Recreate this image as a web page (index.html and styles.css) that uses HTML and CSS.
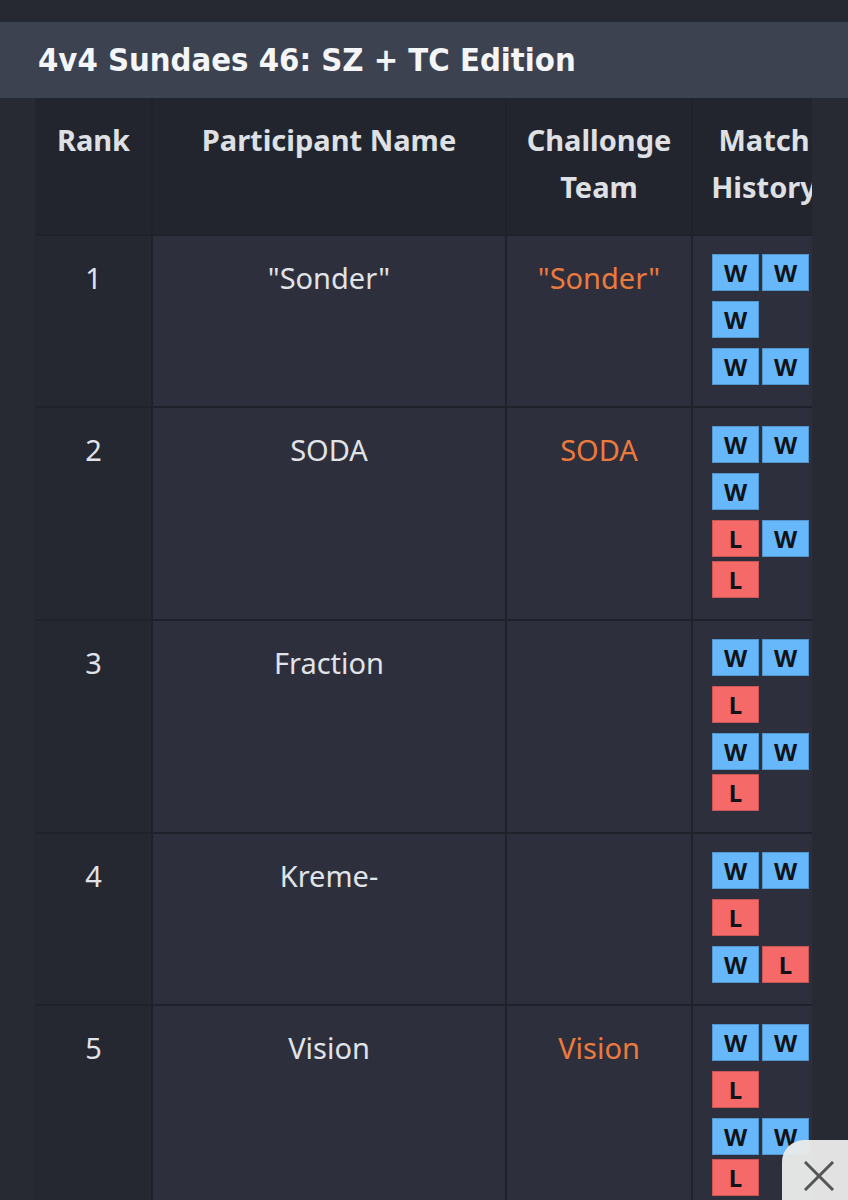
FILE: index.html
```html
<!DOCTYPE html>
<html lang="en">
<head>
<meta charset="utf-8">
<title>4v4 Sundaes 46: SZ + TC Edition</title>
<link rel="stylesheet" href="styles.css">
</head>
<body>
<div class="topbar"></div>
<header class="title-bar">
  <h1 class="title">4v4 Sundaes 46: SZ + TC Edition</h1>
</header>
<main class="page">
  <div class="table-scroll">
    <div class="standings">
      <div class="cell head rank">Rank</div>
      <div class="cell head">Participant Name</div>
      <div class="cell head">Challonge Team</div>
      <div class="cell head">Match History</div>

      <div class="cell rank">1</div>
      <div class="cell">"Sonder"</div>
      <div class="cell team">"Sonder"</div>
      <div class="cell history">
        <div class="group"><span class="b w">W</span><span class="b w">W</span></div>
        <div class="group"><span class="b w">W</span></div>
        <div class="group"><span class="b w">W</span><span class="b w">W</span></div>
      </div>

      <div class="cell rank">2</div>
      <div class="cell">SODA</div>
      <div class="cell team">SODA</div>
      <div class="cell history">
        <div class="group"><span class="b w">W</span><span class="b w">W</span></div>
        <div class="group"><span class="b w">W</span></div>
        <div class="group"><span class="b l">L</span><span class="b w">W</span><span class="b l">L</span></div>
      </div>

      <div class="cell rank">3</div>
      <div class="cell">Fraction</div>
      <div class="cell team"></div>
      <div class="cell history">
        <div class="group"><span class="b w">W</span><span class="b w">W</span></div>
        <div class="group"><span class="b l">L</span></div>
        <div class="group"><span class="b w">W</span><span class="b w">W</span><span class="b l">L</span></div>
      </div>

      <div class="cell rank">4</div>
      <div class="cell">Kreme-</div>
      <div class="cell team"></div>
      <div class="cell history">
        <div class="group"><span class="b w">W</span><span class="b w">W</span></div>
        <div class="group"><span class="b l">L</span></div>
        <div class="group"><span class="b w">W</span><span class="b l">L</span></div>
      </div>

      <div class="cell rank">5</div>
      <div class="cell">Vision</div>
      <div class="cell team">Vision</div>
      <div class="cell history">
        <div class="group"><span class="b w">W</span><span class="b w">W</span></div>
        <div class="group"><span class="b l">L</span></div>
        <div class="group"><span class="b w">W</span><span class="b w">W</span><span class="b l">L</span></div>
      </div>
    </div>
  </div>
</main>
<button class="close-btn" aria-label="Close">
  <svg width="30" height="30" viewBox="0 0 30 30"><path d="M2 2 L28 28 M28 2 L2 28" stroke="#555" stroke-width="3" fill="none" stroke-linecap="square"/></svg>
</button>
</body>
</html>
```
FILE: styles.css
```css
html, body {
  margin: 0;
  padding: 0;
  background: #272a33;
  font-family: "Noto Sans", "Open Sans", sans-serif;
  color: #e1e3e7;
  overflow: hidden;
}

.topbar {
  height: 22px;
  background: #262932;
}

.title-bar {
  height: 76px;
  background: #3d4250;
  display: flex;
  align-items: center;
  padding-left: 38px;
}

.title {
  margin: 0;
  font-family: "DejaVu Sans Condensed", "DejaVu Sans", sans-serif;
  font-weight: bold;
  font-size: 32.5px;
  color: #f4f5f7;
}

.page {
  padding: 0 36px;
}

.table-scroll {
  overflow: hidden;
  border-left: 1px solid #22252d;
  margin-left: -1px;
}

.standings {
  display: grid;
  grid-template-columns: 117px 354px 186px 144px;
  width: 801px;
}

.cell {
  box-sizing: border-box;
  background: #2d303c;
  border-right: 2px solid #1f222a;
  border-bottom: 2px solid #1f222a;
  padding: 18px 12px 11px;
  text-align: center;
  font-size: 29px;
  line-height: 47px;
}

.cell.rank {
  background: #252831;
}

.cell.head {
  background: #22252e;
  font-weight: bold;
  color: #dfe0e4;
  padding: 18px 14px 24px;
}

.cell.team {
  color: #ec7a3c;
}

.cell.history {
  text-align: left;
  padding: 18px 12px 11px 19px;
}

.group {
  display: flex;
  flex-wrap: wrap;
  column-gap: 3px;
  row-gap: 4px;
  width: 97px;
  margin-bottom: 10px;
}

.b {
  box-sizing: border-box;
  width: 47px;
  height: 37px;
  display: flex;
  align-items: center;
  justify-content: center;
  font-weight: bold;
  font-size: 24px;
  line-height: 1;
  color: #111318;
  border: 1px solid rgba(0, 0, 0, 0.18);
}

.b.w {
  background: #66b8fa;
}

.b.l {
  background: #f56a68;
}

.close-btn {
  position: fixed;
  left: 782px;
  top: 1140px;
  width: 90px;
  height: 80px;
  border: none;
  padding: 0;
  border-top-left-radius: 22px;
  background: rgba(234, 234, 234, 0.96);
  display: flex;
  align-items: flex-start;
  justify-content: flex-start;
}

.close-btn svg {
  margin: 21px 0 0 22px;
}
```
